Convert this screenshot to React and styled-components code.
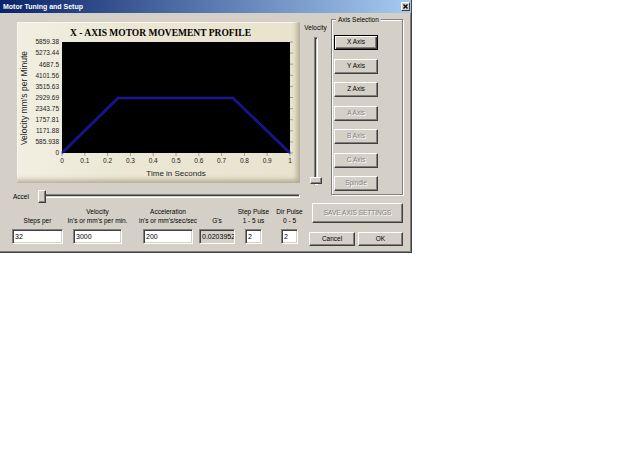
import React from 'react';
import styled, { createGlobalStyle } from 'styled-components';

const GlobalStyle = createGlobalStyle`
  html, body { margin: 0; padding: 0; background: #ffffff; }
  body { font-family: "Liberation Sans", Arial, sans-serif; }
  #root { width: 620px; height: 465px; }
`;

const UI = `"Liberation Sans", Arial, sans-serif`;

const Window = styled.div`
  box-sizing: border-box;
  width: 412px;
  height: 253px;
  background: #d4d0c8;
  border-right: 1px solid #404040;
  border-bottom: 1px solid #404040;
  box-shadow: inset -1px -1px #808080;
  display: flex;
  flex-direction: column;
  font-family: ${UI};
  color: #000;
`;

const TitleBar = styled.div`
  flex: none;
  height: 13px;
  background: linear-gradient(to right, #0a246a 0%, #a6caf0 100%);
  display: flex;
  align-items: center;
  justify-content: space-between;
  padding: 0 1px 0 3px;
`;

const TitleText = styled.span`
  color: #fff;
  font: bold 7px ${UI};
  line-height: 13px;
  white-space: nowrap;
`;

const CloseBox = styled.div`
  box-sizing: border-box;
  width: 9px;
  height: 9px;
  background: #d4d0c8;
  border: 1px solid;
  border-color: #fff #404040 #404040 #fff;
  display: flex;
  align-items: center;
  justify-content: center;
`;

const Body = styled.div`
  flex: 1;
  display: flex;
`;

const LeftPane = styled.div`
  width: 302px;
  flex: none;
  display: flex;
  flex-direction: column;
`;

const ChartPanel = styled.div`
  flex: none;
  box-sizing: border-box;
  margin: 9px 0 0 17px;
  width: 283px;
  height: 161px;
  background: linear-gradient(to right, #f2efe2 0%, #ebe7d4 40%, #e8e3cf 100%);
  box-shadow: inset -5px -5px 5px -2px rgba(110, 100, 70, 0.45),
    inset 1px 1px 0 #f8f6ee;
  display: flex;
  flex-direction: column;
`;

const ChartTitle = styled.div`
  height: 14px;
  box-sizing: border-box;
  padding: 6px 0 0 4px;
  line-height: 10px;
  text-align: center;
  font: bold 9.5px "Liberation Serif", "Times New Roman", serif;
  color: #000;
  white-space: nowrap;
`;

const AccelRow = styled.div`
  display: flex;
  align-items: center;
  height: 14px;
  margin-top: 6px;
`;

const SmallLabel = styled.span`
  font: 6.5px ${UI};
  line-height: 9px;
  white-space: nowrap;
`;

const AccelLabel = styled(SmallLabel)`
  margin-left: 13px;
  width: 25px;
`;

const sunkenChannel = `
  box-sizing: border-box;
  border: 1px solid;
  border-color: #808080 #ffffff #ffffff #808080;
  box-shadow: inset 1px 1px #404040;
  background: #d4d0c8;
  position: relative;
`;

const raisedThumb = `
  position: absolute;
  box-sizing: border-box;
  background: #d4d0c8;
  border: 1px solid;
  border-color: #ffffff #404040 #404040 #ffffff;
  box-shadow: inset -1px -1px #808080;
`;

const HTrack = styled.div`
  ${sunkenChannel}
  flex: 1;
  height: 4px;
  margin-right: 2px;
`;

const HThumb = styled.div`
  ${raisedThumb}
  left: -1px;
  top: -5px;
  width: 8px;
  height: 13px;
`;

const FieldsRow = styled.div`
  display: flex;
  align-items: flex-start;
  margin-top: 4px;
`;

const Field = styled.div`
  display: flex;
  flex-direction: column;
  align-items: center;
  width: ${(p) => p.$w}px;
  margin-left: ${(p) => p.$ml}px;
  flex: none;
`;

const FieldLabel = styled.div`
  height: 18px;
  display: flex;
  flex-direction: column;
  justify-content: flex-end;
  align-items: center;
  font: 6.5px ${UI};
  line-height: 9px;
  white-space: nowrap;
`;

const TextBox = styled.input`
  box-sizing: border-box;
  margin-top: 4px;
  width: ${(p) => p.$w}px;
  height: 15px;
  padding: 0 0 0 2px;
  border: 1px solid;
  border-color: #808080 #ffffff #ffffff #808080;
  box-shadow: inset 1px 1px #404040, inset -1px -1px #d4d0c8;
  background: ${(p) => (p.$ro ? '#d4d0c8' : '#ffffff')};
  font: 7px ${UI};
  color: #000;
  outline: none;
  overflow: hidden;
`;

const RightPane = styled.div`
  flex: 1;
  display: flex;
  flex-direction: column;
`;

const TopRight = styled.div`
  display: flex;
`;

const VelocityCol = styled.div`
  width: 27px;
  display: flex;
  flex-direction: column;
  align-items: center;
  padding-top: 11px;
`;

const VelLabel = styled(SmallLabel)`
  line-height: 7px;
`;

const VTrack = styled.div`
  ${sunkenChannel}
  margin-top: 6px;
  width: 4px;
  height: 148px;
`;

const VThumb = styled.div`
  ${raisedThumb}
  left: -5px;
  top: 139px;
  width: 12px;
  height: 7px;
`;

const GroupBox = styled.div`
  box-sizing: border-box;
  position: relative;
  margin: 6px 0 0 2px;
  width: 72px;
  height: 176px;
  border: 1px solid #808080;
  box-shadow: inset 1px 1px #ffffff, 1px 1px #ffffff;
  padding: 15px 0 0 2px;
  display: flex;
  flex-direction: column;
  gap: 8.5px;
`;

const Legend = styled.span`
  position: absolute;
  top: -5px;
  left: 4px;
  padding: 0 2px;
  background: #d4d0c8;
  font: 6.5px ${UI};
  line-height: 9px;
  white-space: nowrap;
`;

const Btn = styled.button`
  box-sizing: border-box;
  flex: none;
  width: ${(p) => p.$w}px;
  height: ${(p) => p.$h}px;
  margin: 0;
  padding: 0;
  background: #d4d0c8;
  border: 1px solid;
  border-color: ${(p) => (p.$default ? '#000' : '#fff #404040 #404040 #fff')};
  box-shadow: ${(p) =>
    p.$default
      ? 'inset 1px 1px #fff, inset -1px -1px #404040, inset -2px -2px #808080'
      : 'inset -1px -1px #808080'};
  font: 6.5px ${UI};
  line-height: 1;
  color: ${(p) => (p.disabled ? '#808080' : '#000')};
  text-shadow: ${(p) => (p.disabled ? '1px 1px #ffffff' : 'none')};
  white-space: nowrap;
`;

const SaveWrap = styled.div`
  margin: 6px 0 0 10px;
`;

const ButtonRow = styled.div`
  display: flex;
  gap: 3px;
  margin: 9px 0 0 7px;
`;

const yLabels = ['5859.38', '5273.44', '4687.5', '4101.56', '3515.63', '2929.69', '2343.75', '1757.81', '1171.88', '585.938', '0'];
const xLabels = ['0', '0.1', '0.2', '0.3', '0.4', '0.5', '0.6', '0.7', '0.8', '0.9', '1'];

const PlotL = 45, PlotT = 6, PlotW = 228, PlotH = 111;
const font = 'Liberation Sans, Arial, sans-serif';

const ChartPlot = () => {
  const pts = [
    [PlotL, PlotT + PlotH],
    [101, PlotT + 56],
    [216, PlotT + 56],
    [PlotL + PlotW, PlotT + PlotH],
  ]
    .map((p) => p.join(','))
    .join(' ');
  return (
    <svg width="283" height="147" viewBox="0 0 283 147" style={{ display: 'block' }}>
      <rect x={PlotL} y={PlotT} width={PlotW} height={PlotH} fill="#000" />
      {yLabels.map((l, i) => {
        const y = PlotT + (i * PlotH) / 10;
        return (
          <g key={l}>
            <line x1={PlotL + PlotW} x2={PlotL + PlotW + 3} y1={y} y2={y} stroke="#8a8a8a" strokeWidth="0.8" />
            <text x={PlotL - 3} y={y + 2.3} textAnchor="end" fontSize="6.5" fontFamily={font} fill="#222">
              {l}
            </text>
          </g>
        );
      })}
      {xLabels.map((l, i) => {
        const x = PlotL + (i * PlotW) / 10;
        return (
          <g key={l}>
            <line x1={x} x2={x} y1={PlotT + PlotH} y2={PlotT + PlotH + 3} stroke="#8a8a8a" strokeWidth="0.8" />
            <text x={x} y={127.3} textAnchor="middle" fontSize="6.5" fontFamily={font} fill="#222">
              {l}
            </text>
          </g>
        );
      })}
      <polyline points={pts} fill="none" stroke="#2a2ad8" strokeOpacity="0.75" strokeWidth="2.6" />
      <polyline points={pts} fill="none" stroke="#10108c" strokeWidth="1.2" />
      <text x="159" y="140" textAnchor="middle" fontSize="8" fontFamily={font} fill="#222">
        Time in Seconds
      </text>
      <text
        x="0"
        y="0"
        transform="translate(10 62) rotate(-90)"
        textAnchor="middle"
        fontSize="8.5"
        fontFamily={font}
        fill="#222"
      >
        Velocity mm's per Minute
      </text>
    </svg>
  );
};

const fields = [
  { ml: 12, w: 51, label: ['Steps per'], value: '32' },
  { ml: 10, w: 49, label: ['Velocity', "In's or mm's per min."], value: '3000' },
  { ml: 21, w: 50, label: ['Acceleration', "in's or mm's/sec/sec"], value: '200' },
  { ml: 6, w: 36, label: ["G's"], value: '0.0203952', ro: true },
  { ml: 10, w: 17, label: ['Step Pulse', '1 - 5 us'], value: '2' },
  { ml: 19, w: 17, label: ['Dir Pulse', '0 - 5'], value: '2' },
];

const axes = [
  { t: 'X Axis', def: true },
  { t: 'Y Axis' },
  { t: 'Z Axis' },
  { t: 'A Axis', dis: true },
  { t: 'B Axis', dis: true },
  { t: 'C Axis', dis: true },
  { t: 'Spindle', dis: true },
];

export default function App() {
  return (
    <>
      <GlobalStyle />
      <Window>
        <TitleBar>
          <TitleText>Motor Tuning and Setup</TitleText>
          <CloseBox>
            <svg width="5" height="5" viewBox="0 0 5 5">
              <path d="M0.5 0.5 L4.5 4.5 M4.5 0.5 L0.5 4.5" stroke="#000" strokeWidth="1.3" />
            </svg>
          </CloseBox>
        </TitleBar>
        <Body>
          <LeftPane>
            <ChartPanel>
              <ChartTitle>X - AXIS MOTOR MOVEMENT PROFILE</ChartTitle>
              <ChartPlot />
            </ChartPanel>
            <AccelRow>
              <AccelLabel>Accel</AccelLabel>
              <HTrack>
                <HThumb />
              </HTrack>
            </AccelRow>
            <FieldsRow>
              {fields.map((f) => (
                <Field key={f.label[0]} $w={f.w} $ml={f.ml}>
                  <FieldLabel>
                    {f.label.map((l) => (
                      <span key={l}>{l}</span>
                    ))}
                  </FieldLabel>
                  <TextBox $w={f.w} $ro={f.ro} defaultValue={f.value} readOnly={f.ro} />
                </Field>
              ))}
            </FieldsRow>
          </LeftPane>
          <RightPane>
            <TopRight>
              <VelocityCol>
                <VelLabel>Velocity</VelLabel>
                <VTrack>
                  <VThumb />
                </VTrack>
              </VelocityCol>
              <GroupBox>
                <Legend>Axis Selection</Legend>
                {axes.map((a) => (
                  <Btn key={a.t} $w={44} $h={15} $default={a.def} disabled={a.dis}>
                    {a.t}
                  </Btn>
                ))}
              </GroupBox>
            </TopRight>
            <SaveWrap>
              <Btn $w={91} $h={20} disabled>
                SAVE AXIS SETTINGS
              </Btn>
            </SaveWrap>
            <ButtonRow>
              <Btn $w={46} $h={14}>Cancel</Btn>
              <Btn $w={45} $h={14}>OK</Btn>
            </ButtonRow>
          </RightPane>
        </Body>
      </Window>
    </>
  );
}
